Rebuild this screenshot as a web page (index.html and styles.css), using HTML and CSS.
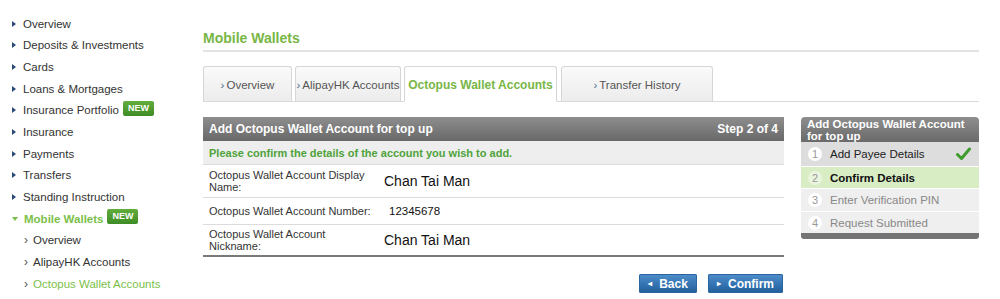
FILE: index.html
```html
<!DOCTYPE html>
<html>
<head>
<meta charset="utf-8">
<link rel="stylesheet" href="styles.css">
</head>
<body>
<div class="page">
  <nav class="sidebar">
    <div class="nav-item"><span class="tri"></span>Overview</div>
    <div class="nav-item"><span class="tri"></span>Deposits &amp; Investments</div>
    <div class="nav-item"><span class="tri"></span>Cards</div>
    <div class="nav-item"><span class="tri"></span>Loans &amp; Mortgages</div>
    <div class="nav-item"><span class="tri"></span>Insurance Portfolio<span class="badge">NEW</span></div>
    <div class="nav-item"><span class="tri"></span>Insurance</div>
    <div class="nav-item"><span class="tri"></span>Payments</div>
    <div class="nav-item"><span class="tri"></span>Transfers</div>
    <div class="nav-item"><span class="tri"></span>Standing Instruction</div>
    <div class="nav-item active"><span class="tri down"></span>Mobile Wallets<span class="badge">NEW</span></div>
    <div class="nav-sub"><span class="chev">›</span>Overview</div>
    <div class="nav-sub"><span class="chev">›</span>AlipayHK Accounts</div>
    <div class="nav-sub current"><span class="chev">›</span>Octopus Wallet Accounts</div>
  </nav>
  <main class="main">
    <h1 class="title">Mobile Wallets</h1>
    <div class="tabs">
      <div class="tab t1"><span class="chev">›</span>Overview</div>
      <div class="tab t2"><span class="chev">›</span>AlipayHK Accounts</div>
      <div class="tab t3 active">Octopus Wallet Accounts</div>
      <div class="tab t4"><span class="chev">›</span>Transfer History</div>
    </div>
    <div class="content">
      <section class="panel">
        <div class="panel-head"><span>Add Octopus Wallet Account for top up</span><span>Step 2 of 4</span></div>
        <div class="panel-sub">Please confirm the details of the account you wish to add.</div>
        <div class="row r1">
          <div class="label">Octopus Wallet Account Display<br>Name:</div>
          <div class="value big">Chan Tai Man</div>
        </div>
        <div class="row r2">
          <div class="label">Octopus Wallet Account Number:</div>
          <div class="value num">12345678</div>
        </div>
        <div class="row r3 last">
          <div class="label">Octopus Wallet Account<br>Nickname:</div>
          <div class="value big">Chan Tai Man</div>
        </div>
        <div class="actions">
          <button class="btn back"><span class="arr">&#9666;</span>Back</button>
          <button class="btn confirm"><span class="arr">&#9656;</span>Confirm</button>
        </div>
      </section>
      <aside class="steps">
        <div class="steps-head">Add Octopus Wallet Account for top up</div>
        <div class="step s1 done"><span class="circ">1</span><span class="stxt">Add Payee Details</span>
          <svg class="check" width="15" height="14" viewBox="0 0 15 14"><path d="M1.5 7.5 L5.5 11.5 L13.5 2" fill="none" stroke="#3f9b2c" stroke-width="3" stroke-linecap="round" stroke-linejoin="round"/></svg>
        </div>
        <div class="step s2 cur"><span class="circ">2</span><span class="stxt">Confirm Details</span></div>
        <div class="step s3 todo"><span class="circ">3</span><span class="stxt">Enter Verification PIN</span></div>
        <div class="step s4 todo"><span class="circ">4</span><span class="stxt">Request Submitted</span></div>
        <div class="steps-foot"></div>
      </aside>
    </div>
  </main>
</div>
</body>
</html>
```

FILE: styles.css
```css
* { box-sizing: border-box; }
html, body { margin: 0; padding: 0; background: #fff; }
body { font-family: "Liberation Sans", Arial, Helvetica, sans-serif; color: #333; }
.page { display: flex; width: 1000px; }

.sidebar { width: 190px; padding-top: 13px; flex: none; }
.nav-item, .nav-sub {
  height: 21.67px; display: flex; align-items: center;
  font-size: 11.5px; color: #333; white-space: nowrap;
}
.nav-item { padding-left: 12px; }
.tri {
  display: inline-block; width: 0; height: 0;
  border-top: 3px solid transparent; border-bottom: 3px solid transparent;
  border-left: 4px solid #2c4a78; margin-right: 7px;
}
.tri.down {
  border-left: 3px solid transparent; border-right: 3px solid transparent;
  border-top: 4px solid #7bbf4a; border-bottom: 0; margin-right: 6px;
}
.nav-item.active { color: #7bbf4a; font-weight: bold; }
.badge {
  display: inline-block; margin-left: 4px; height: 15px; line-height: 15px;
  padding: 0 5px; font-size: 9px; font-weight: bold; color: #fff;
  background: linear-gradient(#62ad3e, #3e8c26); border-radius: 2px;
  position: relative; top: -2px;
}
.nav-sub { padding-left: 24px; }
.nav-sub .chev { color: #555; margin-right: 5px; font-size: 12px; }
.nav-sub.current { color: #7bbf4a; }

.main { width: 776px; margin-left: 13px; flex: none; }
.title {
  margin: 0; padding-top: 30px; height: 52px;
  font-size: 14px; line-height: 17px; font-weight: bold; color: #78b646;
  border-bottom: 2px solid #e3e3e3;
}
.tabs {
  margin-top: 14px; height: 36px; display: flex; align-items: flex-end;
  border-bottom: 1px solid #dadada;
}
.tab {
  height: 36px; margin-bottom: -1px; margin-right: 3px; padding-top: 2px;
  display: flex; align-items: center; justify-content: center;
  border: 1px solid #d6d6d6; border-bottom: 1px solid #dadada; border-radius: 3px 3px 0 0;
  background: linear-gradient(#fafafa, #ececec);
  font-size: 11.5px; color: #555; white-space: nowrap;
}
.tab .chev { color: #4a6a8a; margin-right: 2px; }
.t1 { width: 89px; }
.t2 { width: 106px; }
.t3 { width: 153px; margin-right: 4px; }
.t4 { width: 152px; }
.tab.active {
  background: #fff; border-bottom-color: #fff;
  color: #78b646; font-weight: bold; font-size: 12px;
}

.content { display: flex; gap: 17px; margin-top: 15px; align-items: flex-start; }
.panel { width: 581px; flex: none; }
.panel-head {
  height: 24px; padding: 0 6px; display: flex; align-items: center; justify-content: space-between;
  background: linear-gradient(#8e8e8e, #686868); color: #fff; font-weight: bold; font-size: 12px;
}
.panel-sub {
  height: 24px; padding-left: 6px; display: flex; align-items: center;
  background: #eeeeee; color: #4fa33a; font-weight: bold; font-size: 11px;
  border-bottom: 1px solid #dcdcdc;
}
.row {
  display: flex; align-items: center; padding-left: 6px;
  border-bottom: 1px solid #dcdcdc;
}
.r1 { height: 33px; }
.r2 { height: 27px; }
.r3 { height: 32px; }
.row.last { border-bottom: 2px solid #7a7a7a; }
.label { width: 175px; font-size: 11px; line-height: 12px; color: #333; white-space: nowrap; flex: none; }
.value { color: #111; }
.value.big { font-size: 14px; }
.value.num { font-size: 11.5px; padding-left: 5px; }
.actions { display: flex; justify-content: flex-end; gap: 11px; margin-top: 17px; padding-right: 1px; }
.btn {
  height: 19px; border: 0; border-radius: 2px; padding: 0; margin: 0;
  display: flex; align-items: center; justify-content: center;
  background: linear-gradient(#4f8fcc, #1f5d9b);
  box-shadow: inset 0 0 0 1px #2a659f;
  color: #fff; font-family: "Liberation Sans", Arial, sans-serif; font-weight: bold; font-size: 12px;
}
.btn .arr { font-size: 8px; margin-right: 7px; }
.back { width: 58px; }
.confirm { width: 75px; }

.steps { width: 178px; flex: none; }
.steps-head {
  height: 25px; overflow: hidden; padding: 1px 6px 0;
  background: linear-gradient(#8e8e8e, #6a6a6a); border-radius: 4px 4px 0 0;
  color: #fff; font-weight: bold; font-size: 11.5px; line-height: 12px;
}
.step {
  display: flex; align-items: center; padding-left: 7px; font-size: 11.5px;
  border-top: 1px solid #fff; position: relative;
}
.s1 { height: 24px; background: #dddddd; color: #222; border-top: 0; }
.s2 { height: 22px; background: #d9edc5; color: #111; font-weight: bold; }
.s3 { height: 23px; background: #efefef; color: #888; }
.s4 { height: 22px; background: #efefef; color: #888; }
.circ {
  width: 14px; height: 14px; border-radius: 50%; background: #fff;
  display: inline-flex; align-items: center; justify-content: center;
  font-size: 11px; color: #999; font-weight: normal; margin-right: 8px;
}
.s2 .circ { background: #eaf5df; }
.check { position: absolute; right: 8px; top: 5px; }
.steps-foot { height: 6px; background: #747474; border-radius: 0 0 3px 3px; }
```
